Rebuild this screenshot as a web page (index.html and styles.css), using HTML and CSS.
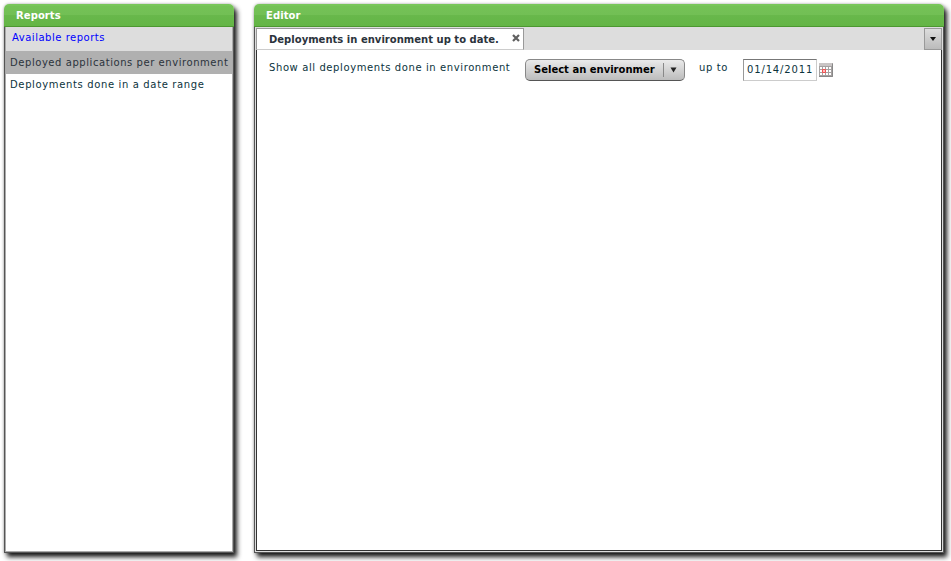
FILE: index.html
```html
<!DOCTYPE html>
<html lang="en">
<head>
<meta charset="utf-8">
<title>Reports</title>
<link rel="stylesheet" href="styles.css">
</head>
<body>
<main class="workspace">
  <section class="panel reports">
    <h1 class="panel-title"><span>Reports</span></h1>
    <div class="reports-body">
      <div class="list-heading"><span>Available reports</span></div>
      <ul class="report-list">
        <li class="selected"><span class="item-a">Deployed applications per environment</span></li>
        <li><span class="item-b">Deployments done in a date range</span></li>
      </ul>
    </div>
  </section>
  <section class="panel editor">
    <h1 class="panel-title"><span>Editor</span></h1>
    <div class="editor-body">
      <div class="tabs">
        <div class="tab"><span class="tab-label">Deployments in environment up to date.</span>
          <svg class="close" width="8" height="8" viewBox="0 0 8 8"><path d="M1 1L7 7M7 1L1 7" stroke="#606060" stroke-width="2.2"/></svg>
        </div>
        <button class="tab-menu"><svg width="6" height="4" viewBox="0 0 6 4"><path d="M0 0H6L3 4Z" fill="#111"/></svg></button>
      </div>
      <div class="content">
        <span class="show">Show all deployments done in environment</span>
        <button class="select"><span class="select-label">Select an environmer</span><i class="divider"></i><svg width="7" height="6" viewBox="0 0 7 6"><path d="M0.5 0.5H6.5L3.5 5.5Z" fill="#222"/></svg></button>
        <span class="upto">up to</span>
        <div class="date"><span>01/14/2011</span></div>
        <svg class="calendar" width="14" height="14" viewBox="0 0 14 14">
          <path d="M0 0H14V14H0Z" fill="#a5a1a1"/>
          <path d="M0 0H13V3H0Z" fill="#c9c5c5"/>
          <path d="M1 4h2v2h-2zM4 4h2v2h-2zM7 4h2v2h-2zM10 4h2v2h-2zM1 7h2v2h-2zM4 7h2v2h-2zM7 7h2v2h-2zM10 7h2v2h-2zM1 10h2v2h-2zM4 10h2v2h-2zM7 10h2v2h-2zM10 10h2v2h-2z" fill="#fff"/>
          <path d="M3.5 6.5h3v3h-3z" fill="#fbb" stroke="#f05050"/>
          <path d="M0 13.5H13.5V1" fill="none" stroke="#888"/>
        </svg>
      </div>
    </div>
  </section>
</main>
</body>
</html>
```
FILE: styles.css
```css
* { box-sizing: border-box; }
body { margin: 0; background: #fff; overflow: hidden; font: 10px/14px "DejaVu Sans", sans-serif; color: #0b333c; }
span { white-space: nowrap; }
.workspace { display: flex; gap: 20px; width: 951px; height: 561px; padding: 4px 7px 8px 4px; }
.panel { display: flex; flex-direction: column; height: 549px; border-radius: 5px 5px 0 0; background: #fff; box-shadow: 3px 4px 5px rgba(0,0,0,.9), 0 0 3px rgba(0,0,0,.3); }
.reports { width: 230px; }
.editor { width: 690px; }
.panel-title { margin: 0; height: 23px; padding: 5px 12px 0; border-radius: 5px 5px 0 0; border-bottom: 1px solid #4c9830; background: linear-gradient(#78c65a 0 2px, #74c256 2px, #72bf55 11px, #68b84b 11px, #64b546); color: #fff; font-size: 10px; line-height: 14px; font-weight: bold; letter-spacing: .08px; }
.reports-body { flex: 1; border: 1px solid #555; border-top: 0; box-shadow: inset -1px -1px #aaa, inset 1px 0 #aaa; padding: 0 1px 1px 1px; }
.list-heading { height: 24px; padding: 4px 0 0 6px; background: #ddd; color: #00f; letter-spacing: .52px; }
.report-list { list-style: none; margin: 0; padding: 0; }
.report-list li { height: 22px; padding: 4px 0 0 4px; }
.report-list .selected { height: 23px; background: #b0b0b0; color: #2b333c; padding-top: 5px; }
.item-a { letter-spacing: .56px; }
.item-b { letter-spacing: .64px; }
.editor-body { flex: 1; display: flex; flex-direction: column; border: 1px solid #555; border-top: 0; padding: 1px; background: #ddd; }
.tabs { height: 22px; display: flex; justify-content: space-between; }
.tab { width: 268px; height: 22px; display: flex; justify-content: space-between; border: 1px solid #999; border-bottom-color: #ccc; background: #fff; color: #2b333c; padding: 4px 3px 0 12px; font-weight: bold; letter-spacing: .02px; }
.close { margin-top: 1px; }
.tab-menu { width: 18px; height: 22px; padding: 0; border: 1px solid #999; background: linear-gradient(#ddd, #bbb); display: flex; align-items: center; justify-content: center; }
.content { flex: 1; display: flex; align-items: flex-start; border: 1px solid #333; border-top: 0; background: #fff; padding: 9px 0 0 12px; }
.show { width: 256px; margin-top: 2px; letter-spacing: .6px; }
.select { width: 160px; height: 22px; display: flex; align-items: center; border: 1px solid #888; border-bottom-color: #555; border-radius: 5px; padding: 0 7px 1px 8px; background: linear-gradient(#eaeaea, #bcbcbc); color: #000; font: bold 10px/14px "DejaVu Sans", sans-serif; }
.select-label { width: 129px; text-align: left; }
.divider { width: 1px; height: 14px; margin-right: 6px; background: #888; }
.upto { width: 44px; margin: 2px 0 0 14px; letter-spacing: .6px; }
.date { width: 74px; height: 22px; border: 1px solid #ccc; border-top-color: #777; border-left-color: #999; padding: 3px 0 0 3px; letter-spacing: .85px; }
.calendar { margin: 4px 0 0 2px; }
```
